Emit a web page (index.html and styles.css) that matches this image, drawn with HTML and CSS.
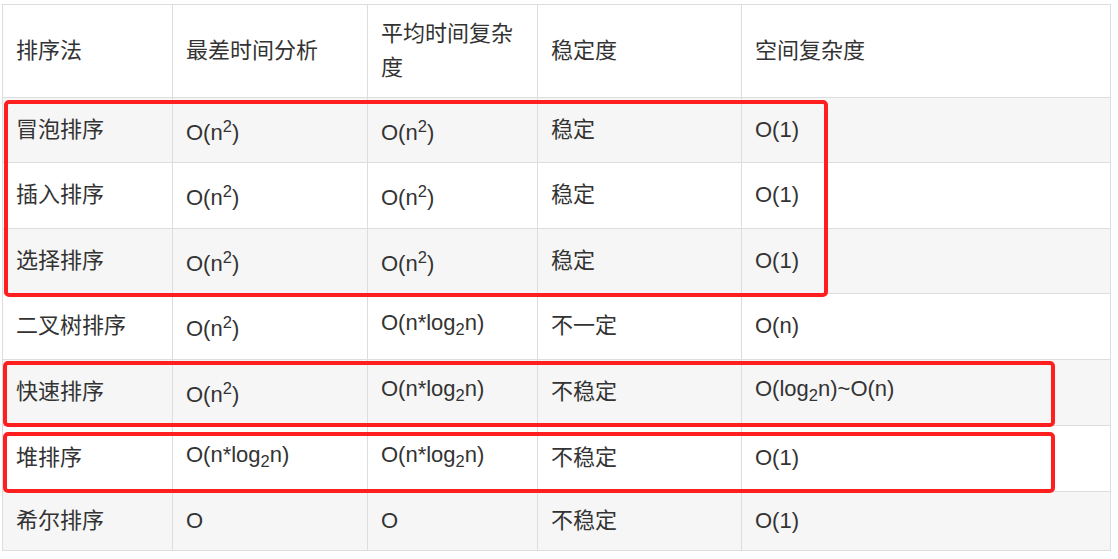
FILE: index.html
```html
<!DOCTYPE html>
<html lang="zh-CN">
<head>
<meta charset="utf-8">
<title>排序算法复杂度</title>
<link rel="stylesheet" href="styles.css">
</head>
<body>
<div class="wrap">
  <table class="sort-table">
    <colgroup>
      <col class="c1"><col class="c2"><col class="c3"><col class="c4"><col class="c5">
    </colgroup>
    <thead>
      <tr><th>排序法</th><th>最差时间分析</th><th>平均时间复杂度</th><th>稳定度</th><th>空间复杂度</th></tr>
    </thead>
    <tbody>
      <tr><td>冒泡排序</td><td>O(n<sup>2</sup>)</td><td>O(n<sup>2</sup>)</td><td>稳定</td><td>O(1)</td></tr>
      <tr><td>插入排序</td><td>O(n<sup>2</sup>)</td><td>O(n<sup>2</sup>)</td><td>稳定</td><td>O(1)</td></tr>
      <tr><td>选择排序</td><td>O(n<sup>2</sup>)</td><td>O(n<sup>2</sup>)</td><td>稳定</td><td>O(1)</td></tr>
      <tr><td>二叉树排序</td><td>O(n<sup>2</sup>)</td><td>O(n*log<sub>2</sub>n)</td><td>不一定</td><td>O(n)</td></tr>
      <tr><td>快速排序</td><td>O(n<sup>2</sup>)</td><td>O(n*log<sub>2</sub>n)</td><td>不稳定</td><td>O(log<sub>2</sub>n)~O(n)</td></tr>
      <tr><td>堆排序</td><td>O(n*log<sub>2</sub>n)</td><td>O(n*log<sub>2</sub>n)</td><td>不稳定</td><td>O(1)</td></tr>
      <tr><td>希尔排序</td><td>O</td><td>O</td><td>不稳定</td><td>O(1)</td></tr>
    </tbody>
  </table>
  <div class="mark mark-a"></div>
  <div class="mark mark-b"></div>
  <div class="mark mark-c"></div>
</div>
</body>
</html>
```

FILE: styles.css
```css
html, body {
  margin: 0;
  padding: 0;
  background: #fff;
}

.wrap {
  position: relative;
  padding: 4px 0 0 2px;
}

.sort-table {
  border-collapse: collapse;
  table-layout: fixed;
  width: 1109px;
  font-family: "Liberation Sans", "Noto Sans CJK SC", sans-serif;
  font-size: 22px;
  line-height: 34px;
  color: #333;
}

.c1 { width: 170px; }
.c2 { width: 195px; }
.c3 { width: 170px; }
.c4 { width: 204px; }
.c5 { width: 369px; }

.sort-table th,
.sort-table td {
  border: 1px solid #dddddd;
  padding: 12px 13px;
  text-align: left;
  vertical-align: middle;
  font-weight: normal;
}

.sort-table thead tr {
  background: #fff;
}

.sort-table tbody tr:nth-child(odd) {
  background: #f6f6f6;
}

.sort-table tbody tr:nth-child(even) {
  background: #fff;
}

.sort-table sup,
.sort-table sub {
  font-size: 0.75em;
  line-height: 33.6px;
}

.mark {
  position: absolute;
  box-sizing: border-box;
  border: 4px solid #ff1f1f;
  border-radius: 5px;
  pointer-events: none;
}

.mark-a {
  left: 4px;
  top: 100px;
  width: 824px;
  height: 197px;
}

.mark-b {
  left: 3px;
  top: 361px;
  width: 1052px;
  height: 66px;
}

.mark-c {
  left: 3px;
  top: 432px;
  width: 1052px;
  height: 61px;
}
```
